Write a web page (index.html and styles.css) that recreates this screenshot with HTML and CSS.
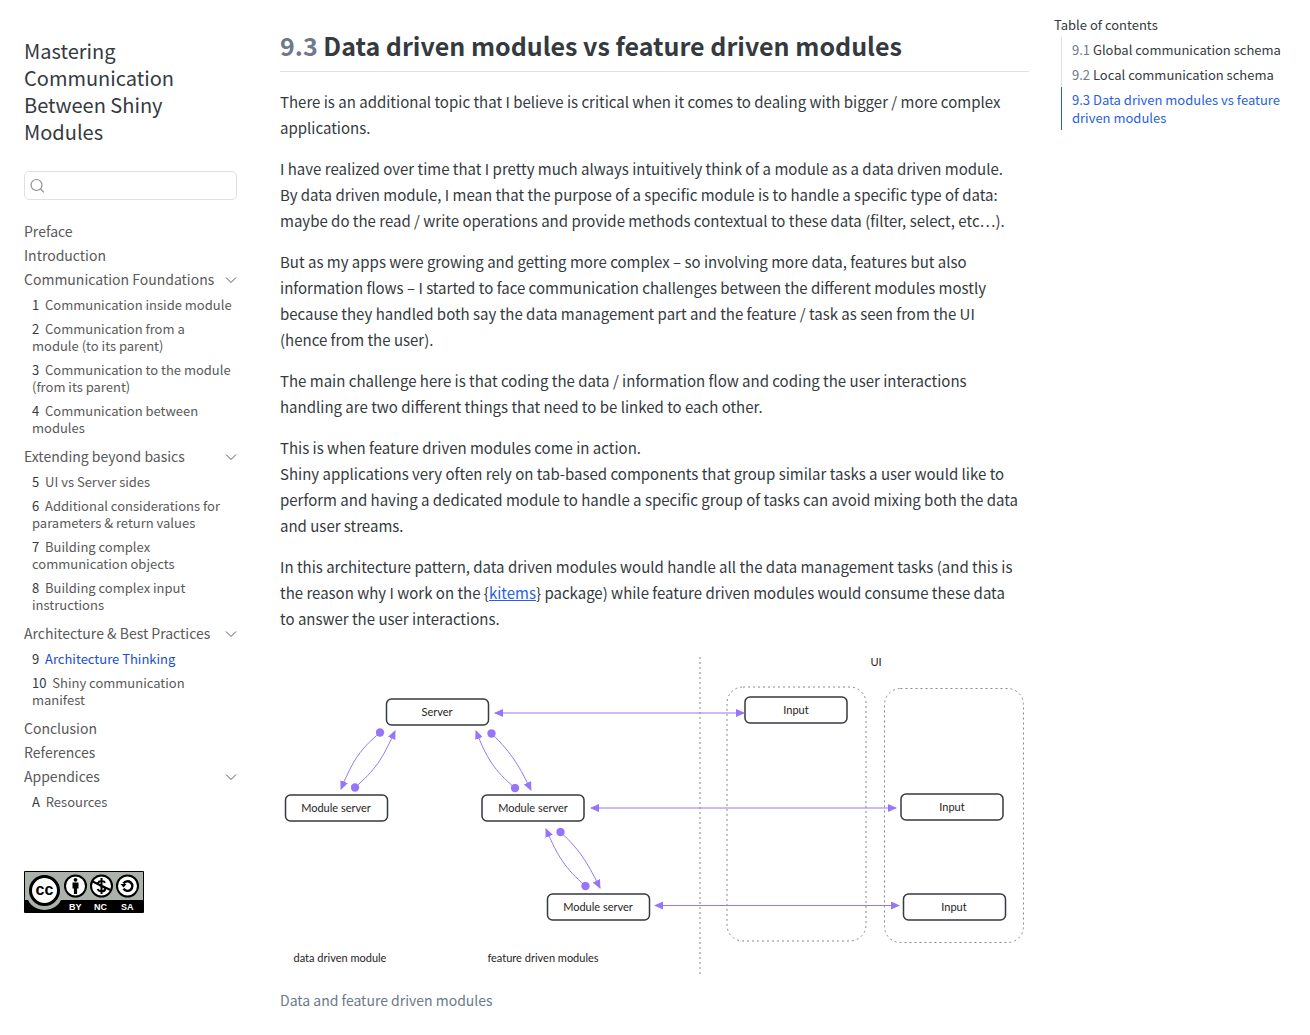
FILE: index.html
```html
<!DOCTYPE html>
<html lang="en">
<head>
<meta charset="utf-8">
<title>Mastering Communication Between Shiny Modules</title>
<link rel="stylesheet" href="styles.css">
</head>
<body>
<div class="page">
  <nav class="sidebar" aria-label="Book">
    <a class="book-title" href="#">Mastering Communication Between Shiny Modules</a>
    <label class="search">
      <svg viewBox="0 0 16 16" width="16" height="16" aria-hidden="true"><circle cx="6.500" cy="7" r="5.500"/><path d="M10.500 11l3.400 3.400"/></svg>
      <input type="search" aria-label="Search">
    </label>
    <ul class="menu">
      <li><a href="#">Preface</a></li>
      <li><a href="#">Introduction</a></li>
      <li>
        <button class="section" type="button">Communication Foundations<svg viewBox="0 0 12 12" width="12" height="12"><path d="M1 3.500l5 5 5-5"/></svg></button>
        <ul class="chapters">
          <li><a href="#"><span class="num">1</span>&nbsp; Communication inside module</a></li>
          <li><a href="#"><span class="num">2</span>&nbsp; Communication from a module (to its parent)</a></li>
          <li><a href="#"><span class="num">3</span>&nbsp; Communication to the module (from its parent)</a></li>
          <li><a href="#"><span class="num">4</span>&nbsp; Communication between modules</a></li>
        </ul>
      </li>
      <li>
        <button class="section" type="button">Extending beyond basics<svg viewBox="0 0 12 12" width="12" height="12"><path d="M1 3.500l5 5 5-5"/></svg></button>
        <ul class="chapters">
          <li><a href="#"><span class="num">5</span>&nbsp; UI vs Server sides</a></li>
          <li><a href="#"><span class="num">6</span>&nbsp; Additional considerations for parameters &amp; return values</a></li>
          <li><a href="#"><span class="num">7</span>&nbsp; Building complex communication objects</a></li>
          <li><a href="#"><span class="num">8</span>&nbsp; Building complex input instructions</a></li>
        </ul>
      </li>
      <li>
        <button class="section" type="button">Architecture &amp; Best Practices<svg viewBox="0 0 12 12" width="12" height="12"><path d="M1 3.500l5 5 5-5"/></svg></button>
        <ul class="chapters">
          <li><a class="current" href="#"><span class="num">9</span>&nbsp; Architecture Thinking</a></li>
          <li><a href="#"><span class="num">10</span>&nbsp; Shiny communication manifest</a></li>
        </ul>
      </li>
      <li><a href="#">Conclusion</a></li>
      <li><a href="#">References</a></li>
      <li>
        <button class="section" type="button">Appendices<svg viewBox="0 0 12 12" width="12" height="12"><path d="M1 3.500l5 5 5-5"/></svg></button>
        <ul class="chapters">
          <li><a href="#"><span class="num">A</span>&nbsp; Resources</a></li>
        </ul>
      </li>
    </ul>
    <a class="license" href="#" aria-label="Creative Commons BY-NC-SA">
      <svg viewBox="0 0 120 42" width="120" height="42">
        <rect width="120" height="42" rx="1" fill="#000"/>
        <path d="M1 1h118v28H1z" fill="#aab2ab"/>
        <circle cx="20.500" cy="20" r="19" fill="#aab2ab"/>
        <path d="M0 29h4l4 10H0zM33 39l4-10h4v10z" fill="#000"/>
        <circle cx="20.500" cy="19.500" r="14" fill="#fff" stroke="#000" stroke-width="3"/>
        <text x="20.500" y="24" class="cc" text-anchor="middle">cc</text>
        <g fill="#fff" stroke="#000" stroke-width="2">
          <circle cx="51.500" cy="15" r="10.500"/><circle cx="77.500" cy="15" r="10.500"/><circle cx="103.500" cy="15" r="10.500"/>
        </g>
        <circle cx="51.500" cy="8.800" r="1.900"/>
        <path d="M48.500 11.500h6v6h-1.400v5.500h-3.200v-5.500h-1.400z"/>
        <g fill="none" stroke="#000" stroke-width="2">
          <path d="M81 11.800q-1-2-3.500-2t-3.500 2.200q0 1.800 3.500 3t3.700 3q-.3 2.300-3.500 2.300t-4-2.300M77.500 7v16M68.500 10.500l18 8.500"/>
          <path d="M99.500 12.500a4.800 4.800 0 1 1 0 5.200" stroke-width="2.400"/>
        </g>
        <path d="M96.500 13h6l-3 3.500z"/>
        <g class="terms"><text x="45" y="39">BY</text><text x="70" y="39">NC</text><text x="97" y="39">SA</text></g>
      </svg>
    </a>
  </nav>

  <main class="content">
    <h2><span class="secnum">9.3</span> Data driven modules vs feature driven modules</h2>
    <p>There is an additional topic that I believe is critical when it comes to dealing with bigger / more complex applications.</p>
    <p>I have realized over time that I pretty much always intuitively think of a module as a data driven module. By data driven module, I mean that the purpose of a specific module is to handle a specific type of data: maybe do the read / write operations and provide methods contextual to these data (filter, select, etc…).</p>
    <p>But as my apps were growing and getting more complex – so involving more data, features but also information flows – I started to face communication challenges between the different modules mostly because they handled both say the data management part and the feature / task as seen from the UI (hence from the user).</p>
    <p>The main challenge here is that coding the data / information flow and coding the user interactions handling are two different things that need to be linked to each other.</p>
    <p>This is when feature driven modules come in action.<br>Shiny applications very often rely on tab-based components that group similar tasks a user would like to perform and having a dedicated module to handle a specific group of tasks can avoid mixing both the data and user streams.</p>
    <p>In this architecture pattern, data driven modules would handle all the data management tasks (and this is the reason why I work on the {<a href="#">kitems</a>} package) while feature driven modules would consume these data to answer the user interactions.</p>
    <figure>
      <svg class="diagram" viewBox="280 650 749 330" role="img" aria-label="Data and feature driven modules">
        <defs>
          <marker id="tip" viewBox="0 0 9 8" markerWidth="9" markerHeight="8" refX="8" refY="4" orient="auto-start-reverse" markerUnits="userSpaceOnUse"><path d="M0 0l9 4-9 4z"/></marker>
          <marker id="dot" viewBox="0 0 9 9" markerWidth="9" markerHeight="9" refX="4.500" refY="4.500" markerUnits="userSpaceOnUse"><circle cx="4.500" cy="4.500" r="4.200"/></marker>
        </defs>
        <g class="dotted">
          <path d="M700 657v318"/>
          <rect x="727" y="687" width="139" height="254" rx="16"/>
          <rect x="884.500" y="688.500" width="139" height="254" rx="16"/>
        </g>
        <g class="boxes">
          <rect x="386.500" y="699" width="102" height="26" rx="5"/>
          <rect x="285.500" y="795" width="102" height="26" rx="5"/>
          <rect x="482" y="795" width="102" height="26" rx="5"/>
          <rect x="547.500" y="894" width="102" height="26" rx="5"/>
          <rect x="745" y="697" width="102" height="26" rx="5"/>
          <rect x="901" y="794" width="102" height="26" rx="5"/>
          <rect x="903.500" y="894" width="102" height="26" rx="5"/>
        </g>
        <g class="links">
          <path d="M495 713H744"/><path d="M591 808H896"/><path d="M655 905.500H899"/>
        </g>
        <g class="curves">
          <path d="M380 732.500C360 750 354 758 341 789"/>
          <path d="M355 787.500C375 770 382 760 395 731"/>
          <path d="M515 788C494 770 487 759 476 731"/>
          <path d="M491.500 733.500C513 754 520 768 531 790"/>
          <path d="M585.500 886C565 868 558 857 546 829"/>
          <path d="M560.500 832C582 852 589 866 600 888"/>
        </g>
        <g class="labels">
          <text x="437" y="716">Server</text>
          <text x="336" y="812">Module server</text>
          <text x="533" y="812">Module server</text>
          <text x="598" y="911">Module server</text>
          <text x="796" y="714">Input</text>
          <text x="952" y="811">Input</text>
          <text x="954" y="911">Input</text>
          <text x="876" y="666">UI</text>
          <text x="340" y="962">data driven module</text>
          <text x="543" y="962">feature driven modules</text>
        </g>
      </svg>
      <figcaption>Data and feature driven modules</figcaption>
    </figure>
  </main>

  <nav class="toc" aria-labelledby="toc-title">
    <h3 id="toc-title">Table of contents</h3>
    <ul>
      <li><a href="#"><span class="secnum">9.1</span> Global communication schema</a></li>
      <li><a href="#"><span class="secnum">9.2</span> Local communication schema</a></li>
      <li><a class="active" href="#">9.3 Data driven modules vs feature driven modules</a></li>
    </ul>
  </nav>
</div>
</body>
</html>
```
FILE: styles.css
```css
* { box-sizing: border-box; }
body {
  margin: 0;
  background: #fff;
  color: #343a40;
  font: 15px/26px "Noto Sans CJK SC", "Open Sans", sans-serif;
}
ul { list-style: none; margin: 0; padding: 0; }
a { color: inherit; text-decoration: none; }
.page {
  display: grid;
  grid-template-columns: 237px minmax(0, 1fr) 236px;
  padding-right: 20px;
}

/* Book navigation */
.sidebar { padding: 37px 0 0 24px; color: #595959; }
.book-title { display: block; color: #343a40; font-size: 20px; line-height: 27px; padding-right: 32px; }
.search {
  display: flex;
  align-items: center;
  height: 29px;
  margin: 26px 0 16px;
  padding: 0 5px;
  border: 1px solid #dee2e6;
  border-radius: 5px;
}
.search svg { fill: none; stroke: #8b8f93; stroke-width: 1.2; flex: none; }
.search input { flex: 1; min-width: 0; border: 0; outline: 0; background: none; font: inherit; }
.menu { font-size: 14px; line-height: 17px; }
.menu > li { padding-top: 7px; }
.section {
  display: flex;
  justify-content: space-between;
  align-items: center;
  width: 100%;
  padding: 0;
  border: 0;
  background: none;
  color: inherit;
  font: inherit;
  text-align: left;
}
.section svg { fill: none; stroke: #595959; }
.chapters { padding: 1px 4px 5px 8px; font-size: 13px; }
.chapters li { padding-top: 7px; }
.num { color: #343a40; }
.current { color: #1a4ed0; }
.license { display: block; margin-top: 56px; line-height: 0; }
.cc { font: bold 16px "Liberation Sans", sans-serif; }
.terms { font: bold 9px "Liberation Sans", sans-serif; fill: #fff; }

/* Article */
.content { padding: 29px 25px 0 43px; }
h2 {
  margin: 0 0 17px;
  padding-bottom: 10px;
  border-bottom: 1px solid #dee2e6;
  font-size: 25px;
  line-height: 32px;
  font-weight: 700;
}
.secnum { color: #6c7a89; }
p { margin: 0 0 15px; padding-right: 8px; }
p a { color: #2761e3; text-decoration: underline; }
figure { margin: 18px 0 0; }
.diagram { display: block; width: 100%; height: auto; }
figcaption { margin-top: 7px; color: #6c7a89; font-size: 14px; }
.dotted { fill: none; stroke: #888; stroke-dasharray: 2 3; }
.boxes { fill: #fff; stroke: #343a40; stroke-width: 1.500; }
.links, .curves { fill: none; stroke: #9775fa; }
.links path { marker-start: url(#tip); marker-end: url(#tip); }
.curves path { marker-start: url(#dot); marker-end: url(#tip); }
marker { fill: #9775fa; stroke: none; }
.labels { fill: #1e1e1e; font: 11px Lato, sans-serif; text-anchor: middle; }

/* Page contents */
.toc { padding-top: 16px; font-size: 13px; line-height: 18px; }
.toc h3 { margin: 0 0 3px; font-size: 13px; font-weight: 400; }
.toc ul { padding-left: 7px; }
.toc a { display: block; padding: 4px 0 3px 10px; border-left: 1px solid #dee2e6; }
.toc .active { color: #2761e3; border-color: #2761e3; }
```
